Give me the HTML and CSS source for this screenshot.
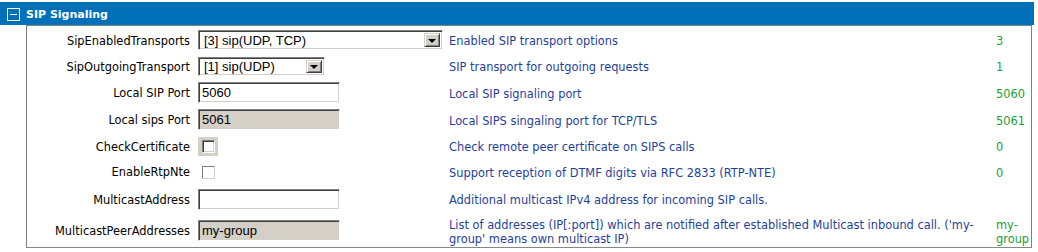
FILE: index.html
```html
<!DOCTYPE html>
<html lang="en">
<head>
    <meta charset="UTF-8">
    <title>SIP Signaling</title>
    <link rel="stylesheet" href="styles.css">
</head>
<body>
    <div class="section">
        <div class="section-head"><span class="toggle"></span>SIP Signaling</div>

        <div class="section-body">
            <label class="name">SipEnabledTransports</label>
            <div class="field">
                <div class="select wide">
                    <span class="select-text">[3] sip(UDP, TCP)</span>
                    <span class="drop"><i></i></span>
                </div>
            </div>
            <div class="desc">Enabled SIP transport options</div>
            <div class="value">3</div>

            <label class="name">SipOutgoingTransport</label>
            <div class="field">
                <div class="select narrow">
                    <span class="select-text">[1] sip(UDP)</span>
                    <span class="drop"><i></i></span>
                </div>
            </div>
            <div class="desc">SIP transport for outgoing requests</div>
            <div class="value">1</div>

            <label class="name">Local SIP Port</label>
            <div class="field"><input class="text" type="text" value="5060"></div>
            <div class="desc">Local SIP signaling port</div>
            <div class="value">5060</div>

            <label class="name">Local sips Port</label>
            <div class="field"><input class="text" type="text" value="5061" disabled></div>
            <div class="desc">Local SIPS singaling port for TCP/TLS</div>
            <div class="value">5061</div>

            <label class="name">CheckCertificate</label>
            <div class="field"><span class="check-wrap"><input class="check" type="checkbox"></span></div>
            <div class="desc">Check remote peer certificate on SIPS calls</div>
            <div class="value">0</div>

            <label class="name">EnableRtpNte</label>
            <div class="field"><input class="check plain" type="checkbox"></div>
            <div class="desc">Support reception of DTMF digits via RFC 2833 (RTP-NTE)</div>
            <div class="value">0</div>

            <label class="name">MulticastAddress</label>
            <div class="field"><input class="text" type="text" value=""></div>
            <div class="desc">Additional multicast IPv4 address for incoming SIP calls.</div>
            <div class="value"></div>

            <label class="name">MulticastPeerAddresses</label>
            <div class="field"><input class="text" type="text" value="my-group" disabled></div>
            <div class="desc">List of addresses (IP[:port]) which are notified after established Multicast inbound call. ('my-group' means own multicast IP)</div>
            <div class="value">my-group</div>
        </div>
    </div>
</body>
</html>
```

FILE: styles.css
```css
body {
    margin: 0;
    background: #fff;
    font-family: "DejaVu Sans", Verdana, sans-serif;
    font-size: 11.4px;
    color: #000;
}

.section {
    width: 1034px;
}

.section-head {
    display: flex;
    align-items: center;
    height: 23px;
    margin-top: 2px;
    padding-left: 7px;
    padding-top: 1px;
    box-sizing: border-box;
    background: #0070b8;
    color: #fff;
    font-weight: bold;
    font-size: 11px;
}

.toggle {
    position: relative;
    width: 11px;
    height: 11px;
    border: 1px solid #fff;
    margin-right: 6px;
    margin-top: 1px;
}

.toggle::after {
    content: "";
    position: absolute;
    left: 2px;
    right: 2px;
    top: 5px;
    height: 1px;
    background: #fff;
}

.section-body {
    display: grid;
    grid-template-columns: 171px 251px 547px 1fr;
    grid-template-rows: 26px 26px 27px 27px 26px 25px 30px 33px;
    align-items: center;
    width: 1004px;
    margin-left: 26px;
    padding-top: 1px;
    border: 1px solid #808080;
    border-bottom-color: #888;
}

.name {
    text-align: right;
    padding-right: 8px;
    padding-top: 1px;
}

.field {
    display: flex;
    align-items: center;
}

.desc {
    color: #1f3f9c;
    padding-right: 8px;
    line-height: 14px;
    padding-top: 2px;
}

.value {
    color: #18a038;
    line-height: 14px;
    padding-top: 2px;
    word-break: break-word;
}

/* classic inset boxes */
.select,
.text {
    box-sizing: border-box;
    border: 1px solid;
    border-color: #808080 #fff #fff #808080;
    box-shadow: inset 1px 1px #404040, inset -1px -1px #d4d0c8;
    font-family: "Liberation Sans", Arial, sans-serif;
    font-size: 13px;
    color: #000;
}

.select {
    display: flex;
    align-items: center;
    height: 20px;
    padding: 2px;
    background: #fff;
}

.select.wide {
    width: 245px;
}

.select.narrow {
    width: 127px;
    height: 19px;
}

.select-text {
    flex: 1;
    padding-left: 3px;
}

.drop {
    display: flex;
    align-items: center;
    justify-content: center;
    width: 16px;
    align-self: stretch;
    box-sizing: border-box;
    background: #d4d0c8;
    border: 1px solid;
    border-color: #d4d0c8 #404040 #404040 #d4d0c8;
    box-shadow: inset 1px 1px #fff, inset -1px -1px #808080;
}

.drop i {
    width: 0;
    height: 0;
    border-left: 4px solid transparent;
    border-right: 4px solid transparent;
    border-top: 4px solid #000;
    margin-top: 1px;
}

.text {
    width: 142px;
    height: 21px;
    padding: 0 0 0 3px;
    background: #fff;
    outline: none;
}

.text:disabled {
    background: #d4d0c8;
    color: #000;
}

.check-wrap {
    display: flex;
    align-items: center;
    justify-content: center;
    width: 20px;
    height: 19px;
    background: #d4d0c8;
}

.check {
    appearance: none;
    margin: 0;
    width: 13px;
    height: 13px;
    box-sizing: border-box;
    background: #fff;
    border: 1px solid;
    border-color: #808080 #fff #fff #808080;
    box-shadow: inset 1px 1px #404040, inset -1px -1px #d4d0c8;
}

.check.plain {
    margin-left: 4px;
    margin-top: 1px;
    border-color: #808080 #d4d0c8 #d4d0c8 #808080;
    box-shadow: none;
}
```
